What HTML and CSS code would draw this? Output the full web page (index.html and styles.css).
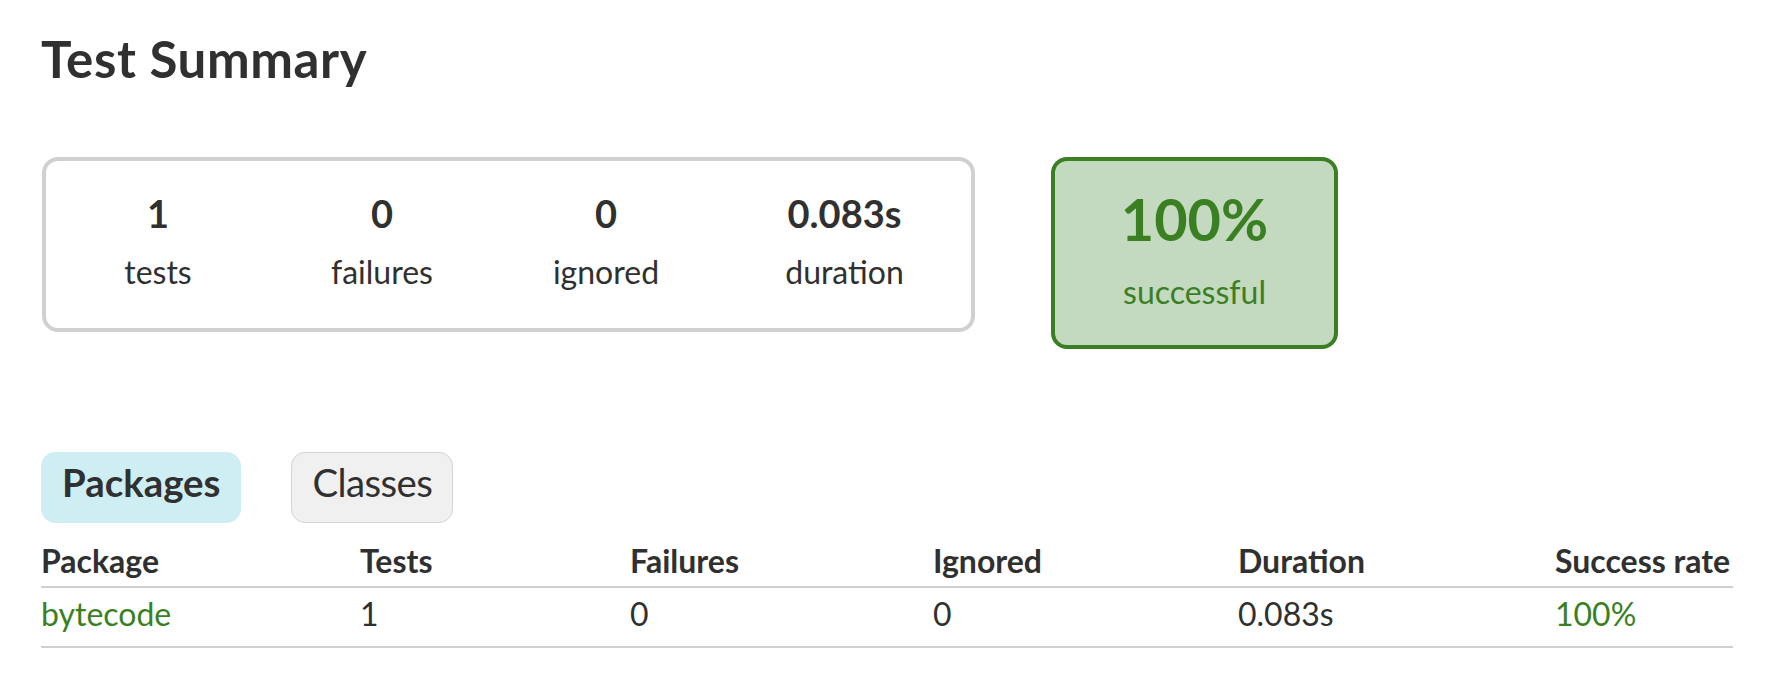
FILE: index.html
```html
<!DOCTYPE html>
<html>
<head>
<meta charset="utf-8">
<title>Test results - Test Summary</title>
<link rel="stylesheet" href="styles.css">
</head>
<body>
<div class="content">
  <h1 class="title">Test Summary</h1>
  <div class="summary">
    <div class="summary-group">
      <div class="info-box"><p class="counter">1</p><p class="label">tests</p></div>
      <div class="info-box"><p class="counter">0</p><p class="label">failures</p></div>
      <div class="info-box"><p class="counter">0</p><p class="label">ignored</p></div>
      <div class="info-box info-duration"><p class="counter">0.083s</p><p class="label">duration</p></div>
    </div>
    <div class="success-rate">
      <p class="percent">100%</p>
      <p class="label">successful</p>
    </div>
  </div>
  <ul class="tab-links">
    <li class="tab selected"><a href="#tab0">Packages</a></li>
    <li class="tab"><a href="#tab1">Classes</a></li>
  </ul>
  <table class="results">
    <colgroup>
      <col class="c1"><col class="c2"><col class="c3"><col class="c4"><col class="c5"><col class="c6">
    </colgroup>
    <thead>
      <tr><th>Package</th><th>Tests</th><th>Failures</th><th>Ignored</th><th>Duration</th><th>Success rate</th></tr>
    </thead>
    <tbody>
      <tr><td class="success"><a href="#">bytecode</a></td><td>1</td><td>0</td><td>0</td><td>0.083s</td><td class="success">100%</td></tr>
    </tbody>
  </table>
</div>
</body>
</html>
```
FILE: styles.css
```css
html, body {
  margin: 0;
  padding: 0;
  background: #ffffff;
}
body {
  font-family: "Lato", "Liberation Sans", sans-serif;
  font-size: 32px;
  color: #303030;
}
.content {
  padding: 29px 0 0 41px;
}
.title {
  margin: 0;
  font-size: 51px;
  line-height: 60px;
  font-weight: 700;
  letter-spacing: 0.6px;
  white-space: nowrap;
}
.summary {
  display: flex;
  align-items: flex-start;
  margin-top: 68px;
  padding-left: 1px;
}
.summary-group {
  display: grid;
  grid-template-columns: 224px 224px 224px 253px;
  border: 4px solid #d0d0d0;
  border-radius: 16px;
}
.info-box {
  text-align: center;
  padding: 30px 0 33px;
}
.info-box p, .success-rate p {
  margin: 0;
}
.counter {
  font-size: 38px;
  font-weight: 700;
  line-height: 45px;
  margin-bottom: 13px !important;
}
.label {
  line-height: 46px;
}
.success-rate {
  width: 279px;
  margin-left: 76px;
  text-align: center;
  padding: 31px 0 24px;
  border: 4px solid #3a7f22;
  border-radius: 16px;
  background: #c3d9c0;
  color: #3a7f22;
}
.percent {
  font-size: 57.6px;
  font-weight: 700;
  line-height: 54px;
  margin-bottom: 16px !important;
}
.success-rate .label {
  line-height: 59px;
}
.tab-links {
  display: flex;
  list-style: none;
  margin: 103px 0 0;
  padding: 0;
}
.tab {
  padding: 6px 20px 17px;
  margin-right: 50px;
  border: 1px solid #d4d4d4;
  border-radius: 14px;
  background: #f0f0f0;
}
.tab a {
  display: block;
  font-size: 38.4px;
  line-height: 46px;
  color: #303030;
  text-decoration: none;
  letter-spacing: -0.6px;
}
.tab.selected {
  background: #ceeef3;
  border-color: #ceeef3;
}
.tab.selected a {
  font-weight: 700;
  letter-spacing: 0;
}
.results {
  margin-top: 19px;
  border-collapse: collapse;
  table-layout: fixed;
  width: 1692px;
  border-bottom: 2px solid #d0d0d0;
}
.c1 { width: 319px; }
.c2 { width: 270px; }
.c3 { width: 303px; }
.c4 { width: 305px; }
.c5 { width: 317px; }
.c6 { width: 178px; }
.results th {
  text-align: left;
  white-space: nowrap;
  font-weight: 700;
  line-height: 38px;
  padding: 0 0 6px;
  border-bottom: 2px solid #d0d0d0;
}
.results td {
  white-space: nowrap;
  line-height: 38px;
  padding: 7px 0 13px;
}
.success, .success a {
  color: #3a7f22;
  text-decoration: none;
}
```
